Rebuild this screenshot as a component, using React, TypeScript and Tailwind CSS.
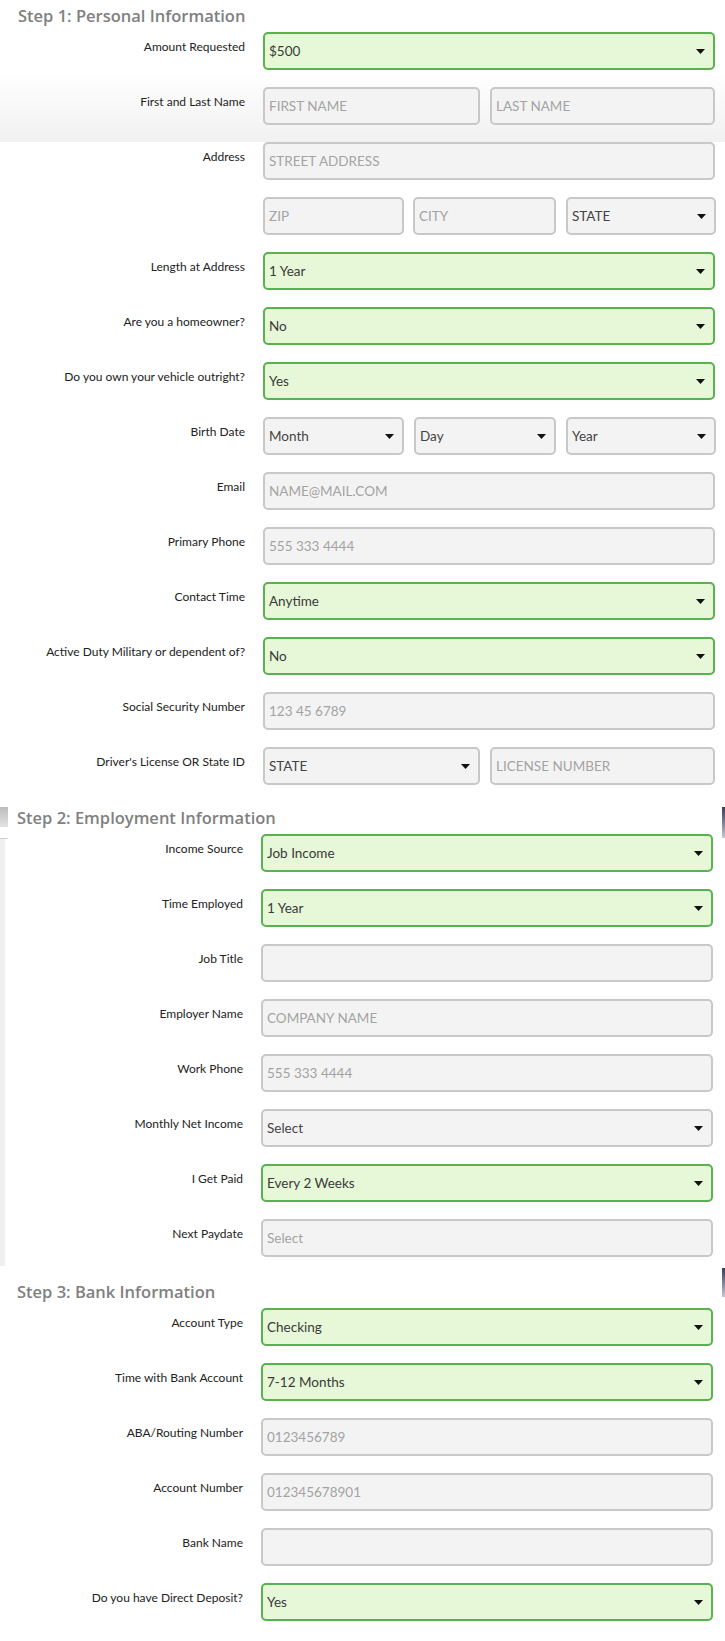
import React from "react";

type Tone = "green" | "gray";

const Arrow = () => (
  <svg width="9" height="5" viewBox="0 0 9 5" className="shrink-0">
    <path d="M0 0H9L4.5 5Z" fill="#111" />
  </svg>
);

function Field({
  text,
  tone = "gray",
  select = false,
  placeholder = false,
}: {
  text?: string;
  tone?: Tone;
  select?: boolean;
  placeholder?: boolean;
}) {
  const box =
    tone === "green"
      ? "border-[#5ab14f] bg-[#e6f8d7] text-[#3a3a3a]"
      : placeholder
      ? "border-[#c8c8c8] bg-[#f3f3f3] text-[#a3a3a3]"
      : "border-[#c8c8c8] bg-[#f3f3f3] text-[#444444]";
  return (
    <div
      className={`h-[38px] rounded-[5px] border-2 flex items-center pl-[4px] pr-[8px] text-[13.5px] ${box}`}
    >
      <span className="flex-1 truncate">{text}</span>
      {select && <Arrow />}
    </div>
  );
}

function Row({
  label,
  children,
  lw,
}: {
  label: string;
  children: React.ReactNode;
  lw: "a" | "b";
}) {
  return (
    <div className="flex h-[55px]">
      <div
        className={`${
          lw === "a" ? "w-[245px]" : "w-[243px]"
        } shrink-0 text-right pt-[7px] text-[12px] leading-[16px] text-[#222222]`}
      >
        {label}
      </div>
      <div className="ml-[18px] w-[452px] shrink-0">{children}</div>
    </div>
  );
}

function Heading({ text, pl }: { text: string; pl: "a" | "b" }) {
  return (
    <div
      className={`h-[32px] pt-[4px] text-[16.5px] leading-[24px] font-semibold text-[#808080] ${
        pl === "a" ? "pl-[18px]" : "pl-[17px]"
      }`}
      style={{ fontFamily: "'Open Sans', Lato, sans-serif" }}
    >
      {text}
    </div>
  );
}

function Two({ children }: { children: React.ReactNode }) {
  return <div className="grid grid-cols-[217px_225px] gap-x-[10px]">{children}</div>;
}

function Three({ children }: { children: React.ReactNode }) {
  return <div className="grid grid-cols-[141px_142px_150px] gap-x-[10px]">{children}</div>;
}

export default function App() {
  return (
    <div
      className="relative w-[725px] min-h-[1641px] bg-white overflow-hidden"
      style={{ fontFamily: "Lato, 'Open Sans', 'Liberation Sans', sans-serif" }}
    >
      {/* Step 1 */}
      <section>
        <div className="bg-linear-to-b from-white via-white to-[#f1f1f1]">
          <Heading text="Step 1: Personal Information" pl="a" />
          <Row label="Amount Requested" lw="a">
            <Field text="$500" tone="green" select />
          </Row>
          <Row label="First and Last Name" lw="a">
            <Two>
              <Field text="FIRST NAME" placeholder />
              <Field text="LAST NAME" placeholder />
            </Two>
          </Row>
        </div>
        <Row label="Address" lw="a">
          <Field text="STREET ADDRESS" placeholder />
        </Row>
        <Row label="" lw="a">
          <Three>
            <Field text="ZIP" placeholder />
            <div className="-ml-px">
              <Field text="CITY" placeholder />
            </div>
            <Field text="STATE" select />
          </Three>
        </Row>
        <Row label="Length at Address" lw="a">
          <Field text="1 Year" tone="green" select />
        </Row>
        <Row label="Are you a homeowner?" lw="a">
          <Field text="No" tone="green" select />
        </Row>
        <Row label="Do you own your vehicle outright?" lw="a">
          <Field text="Yes" tone="green" select />
        </Row>
        <Row label="Birth Date" lw="a">
          <Three>
            <Field text="Month" select />
            <Field text="Day" select />
            <Field text="Year" select />
          </Three>
        </Row>
        <Row label="Email" lw="a">
          <Field text="NAME@MAIL.COM" placeholder />
        </Row>
        <Row label="Primary Phone" lw="a">
          <Field text="555 333 4444" placeholder />
        </Row>
        <Row label="Contact Time" lw="a">
          <Field text="Anytime" tone="green" select />
        </Row>
        <Row label="Active Duty Military or dependent of?" lw="a">
          <Field text="No" tone="green" select />
        </Row>
        <Row label="Social Security Number" lw="a">
          <Field text="123 45 6789" placeholder />
        </Row>
        <Row label="Driver's License OR State ID" lw="a">
          <Two>
            <Field text="STATE" select />
            <Field text="LICENSE NUMBER" placeholder />
          </Two>
        </Row>
      </section>

      {/* Step 2 */}
      <section className="relative">
        <div className="absolute left-0 top-[36px] w-[5px] h-[428px] bg-[#efefef]" />
        <div className="absolute left-0 top-[5px] w-[8px] h-[20px] bg-linear-to-b from-[#bdbdbd] to-[#e2e2e2]" />
        <div className="absolute left-0 top-[36px] w-[8px] h-px bg-[#cfcfcf]" />
        <Heading text="Step 2: Employment Information" pl="b" />
        <Row label="Income Source" lw="b">
          <Field text="Job Income" tone="green" select />
        </Row>
        <Row label="Time Employed" lw="b">
          <Field text="1 Year" tone="green" select />
        </Row>
        <Row label="Job Title" lw="b">
          <Field text="" />
        </Row>
        <Row label="Employer Name" lw="b">
          <Field text="COMPANY NAME" placeholder />
        </Row>
        <Row label="Work Phone" lw="b">
          <Field text="555 333 4444" placeholder />
        </Row>
        <Row label="Monthly Net Income" lw="b">
          <Field text="Select" select />
        </Row>
        <Row label="I Get Paid" lw="b">
          <Field text="Every 2 Weeks" tone="green" select />
        </Row>
        <Row label="Next Paydate" lw="b">
          <Field text="Select" placeholder />
        </Row>
      </section>

      {/* Step 3 */}
      <section className="pt-[2px]">
        <Heading text="Step 3: Bank Information" pl="b" />
        <Row label="Account Type" lw="b">
          <Field text="Checking" tone="green" select />
        </Row>
        <Row label="Time with Bank Account" lw="b">
          <Field text="7-12 Months" tone="green" select />
        </Row>
        <Row label="ABA/Routing Number" lw="b">
          <Field text="0123456789" placeholder />
        </Row>
        <Row label="Account Number" lw="b">
          <Field text="012345678901" placeholder />
        </Row>
        <Row label="Bank Name" lw="b">
          <Field text="" />
        </Row>
        <Row label="Do you have Direct Deposit?" lw="b">
          <Field text="Yes" tone="green" select />
        </Row>
      </section>

      {/* edge fragments */}
      <div className="absolute right-0 top-[807px] w-[3px] h-[31px] bg-linear-to-b from-[#3c3c5e] to-[#c9c9d4]" />
      <div className="absolute right-0 top-[1268px] w-[3px] h-[29px] bg-linear-to-b from-[#3c3c5e] to-[#c9c9d4]" />
    </div>
  );
}
